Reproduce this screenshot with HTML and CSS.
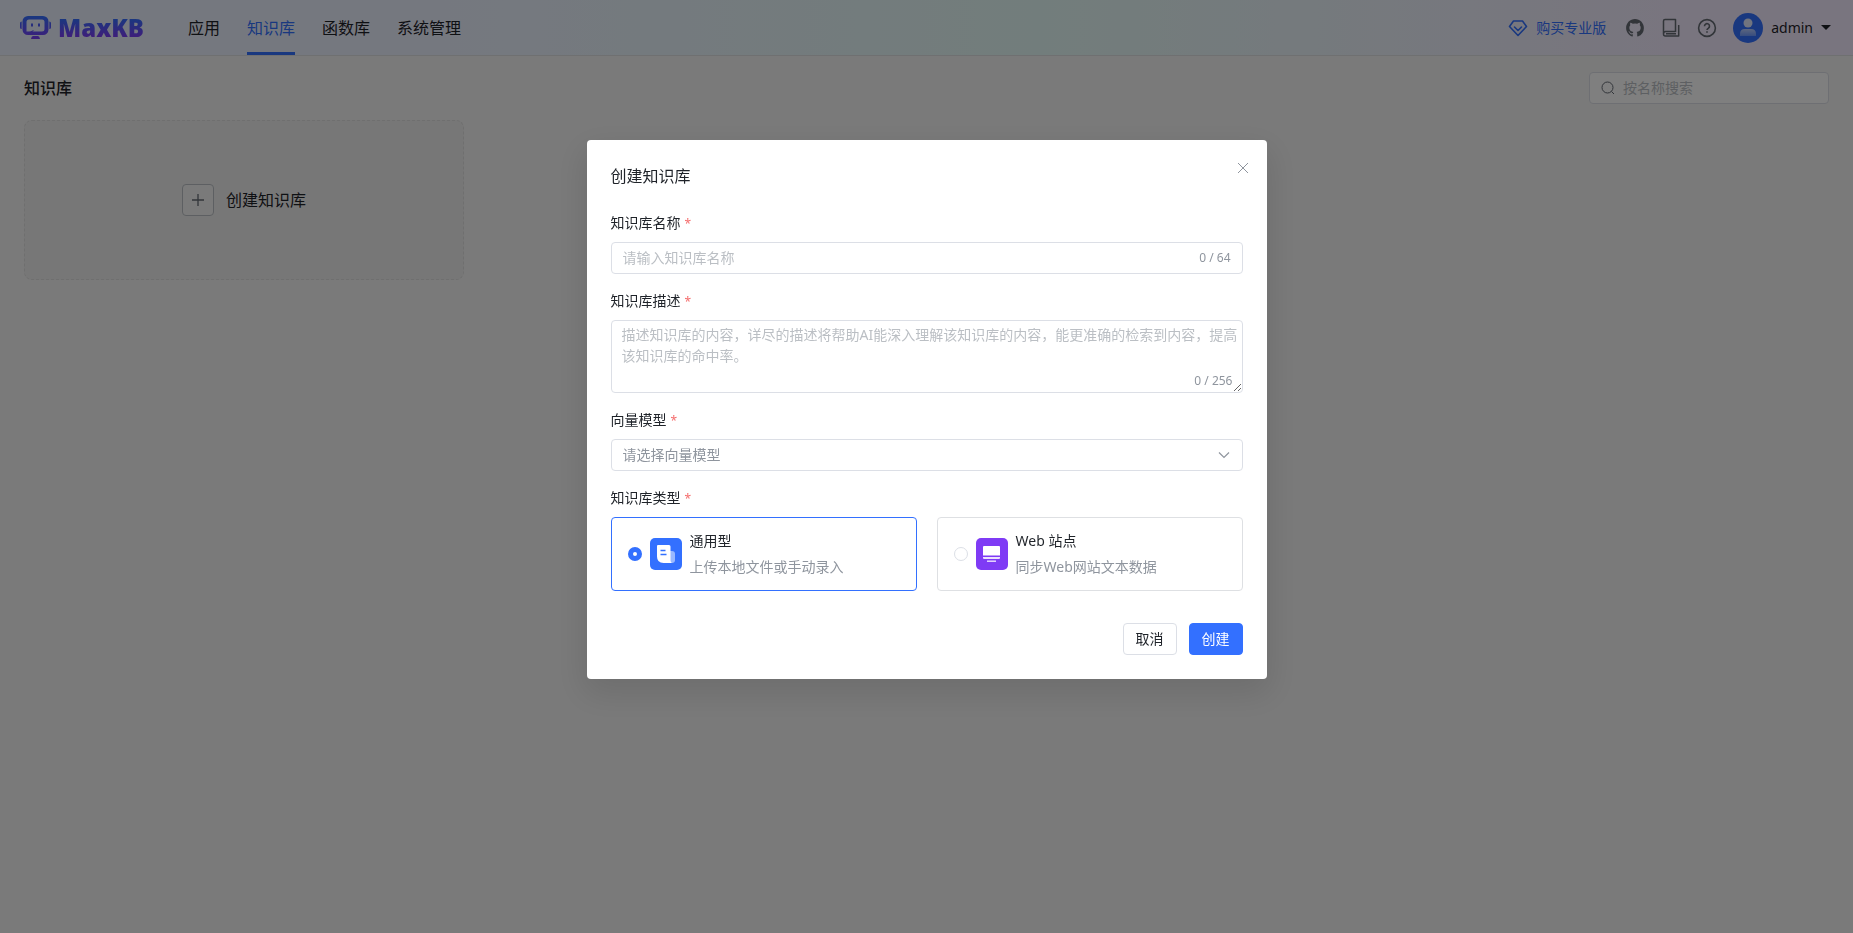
FILE: index.html
```html
<!DOCTYPE html>
<html lang="zh-CN">
<head>
    <meta charset="UTF-8">
    <meta name="viewport" content="width=device-width, initial-scale=1.0">
    <title>MaxKB</title>
    <link rel="stylesheet" href="styles.css">
</head>
<body>
    <header class="app-header">
        <a class="logo" href="#" aria-label="MaxKB">
            <svg class="logo-icon" viewBox="0 0 32 24" fill="none">
                <defs>
                    <linearGradient id="logoFill" x1="0" y1="0" x2="0" y2="24" gradientUnits="userSpaceOnUse">
                        <stop stop-color="#3370ff"/>
                        <stop offset="1" stop-color="#7f3bf5"/>
                    </linearGradient>
                </defs>
                <path fill="url(#logoFill)" fill-rule="evenodd" d="M8 0h15a5.500 5.500 0 0 1 5.500 5.500v8a5.500 5.500 0 0 1-5.500 5.500H8a5.500 5.500 0 0 1-5.500-5.500v-8A5.500 5.500 0 0 1 8 0zM9 3.500a2.500 2.500 0 0 0-2.500 2.500v9.500h2.500q2 0 3.500-1l1.500-.5q-1 1.500-2 1.500h10a2.500 2.500 0 0 0 2.500-2.500V6a2.500 2.500 0 0 0-2.500-2.500z"/>
                <path fill="url(#logoFill)" d="M0 7q0-1.500 1.700-1.500v7.500Q0 13 0 11.500zM31 7q0-1.500-1.700-1.500v7.500q1.700 0 1.700-1.500zM13 20h5q1.500 0 2 3h-9q.5-3 2-3zM11 7.500h2v3h-2zM18 7.500h2v3h-2z"/>
            </svg>
            <span class="logo-text">MaxKB</span>
        </a>
        <nav class="main-nav">
            <a href="#">应用</a>
            <a class="active" href="#">知识库</a>
            <a href="#">函数库</a>
            <a href="#">系统管理</a>
        </nav>
        <div class="header-right">
            <a class="buy-link" href="#">
                <svg class="icon" viewBox="0 0 20 20" fill="none" stroke="currentColor" stroke-width="1.600" stroke-linejoin="round" stroke-linecap="round">
                    <path d="M5.500 3h9L18.500 8.500 10 17.500 1.500 8.500zM6.500 9 10 12.500 13.500 9"/>
                </svg>
                购买专业版
            </a>
            <div class="header-tools">
                <a href="#" aria-label="GitHub">
                    <svg class="icon" viewBox="-1 -1 18 18" fill="currentColor">
                        <path d="M8 0C3.580 0 0 3.580 0 8c0 3.540 2.290 6.530 5.470 7.590.4.070.55-.17.55-.38 0-.19-.01-.82-.01-1.490-2.010.37-2.530-.49-2.690-.94-.09-.23-.48-.94-.82-1.130-.28-.15-.68-.52-.01-.53.63-.01 1.080.58 1.230.82.72 1.210 1.870.87 2.330.66.07-.52.28-.87.51-1.070-1.780-.2-3.640-.89-3.640-3.950 0-.87.31-1.590.82-2.150-.08-.2-.36-1.020.08-2.120 0 0 .67-.21 2.200.82a7.500 7.500 0 0 1 4 0c1.530-1.040 2.200-.82 2.200-.82.44 1.100.16 1.920.08 2.120.51.56.82 1.270.82 2.150 0 3.070-1.870 3.750-3.650 3.950.29.25.54.73.54 1.480 0 1.070-.01 1.930-.01 2.200 0 .21.15.46.55.38A8 8 0 0 0 16 8c0-4.420-3.580-8-8-8z"/>
                    </svg>
                </a>
                <a href="#" aria-label="文档">
                    <svg class="icon" viewBox="0 0 20 20" fill="none" stroke="currentColor" stroke-width="1.500" stroke-linejoin="round">
                        <path d="M14.500 14V1.500H4Q2.500 1.500 2.500 3v13q0 2 1.800 2h13.400V7M14.500 13.500H4.500Q2.500 13.500 2.500 16M5 15.800h10"/>
                    </svg>
                </a>
                <a href="#" aria-label="帮助">
                    <svg class="icon" viewBox="0 0 20 20" fill="none" stroke="currentColor" stroke-width="1.600">
                        <circle cx="10" cy="10" r="8.400"/>
                        <path d="M7.500 8.300a2.500 2.500 0 1 1 3.900 1.900Q10 11 10 12M10 13.200v1.600"/>
                    </svg>
                </a>
            </div>
            <button class="user-menu" type="button">
                <svg class="avatar" viewBox="0 0 30 30">
                    <defs>
                        <linearGradient id="bodyFill" x1="0" y1="15" x2="0" y2="23" gradientUnits="userSpaceOnUse">
                            <stop stop-color="#fff" stop-opacity=".7"/>
                            <stop offset="1" stop-color="#fff" stop-opacity=".3"/>
                        </linearGradient>
                    </defs>
                    <circle cx="15" cy="15" r="15" fill="#3370ff"/>
                    <circle cx="15" cy="10" r="4.500" fill="#e0e9ff"/>
                    <path fill="url(#bodyFill)" d="M7 23v-2q0-5 5-5h6q5 0 5 5v2z"/>
                </svg>
                admin
                <span class="caret"></span>
            </button>
        </div>
    </header>

    <main class="page">
        <div class="page-head">
            <h1>知识库</h1>
            <label class="search">
                <svg viewBox="0 0 14 14" fill="none" stroke="currentColor">
                    <circle cx="6.500" cy="6.500" r="5.500"/>
                    <path d="m10.500 10.500 2.500 2.500"/>
                </svg>
                <input type="text" placeholder="按名称搜索" aria-label="按名称搜索">
            </label>
        </div>
        <div class="card-grid">
            <button class="create-card" type="button">
                <span class="plus-box">
                    <svg viewBox="0 0 12 12" fill="none" stroke="currentColor" stroke-width="1.300"><path d="M6 0v12M0 6h12"/></svg>
                </span>
                创建知识库
            </button>
        </div>
    </main>

    <div class="overlay">
        <form class="dialog" role="dialog" aria-labelledby="dialogTitle">
            <button class="dialog-close" type="button" aria-label="关闭">
                <svg viewBox="0 0 12 12" fill="none" stroke="currentColor"><path d="m1 1 10 10M11 1 1 11"/></svg>
            </button>
            <h2 id="dialogTitle">创建知识库</h2>

            <div class="form-item">
                <label class="form-label" for="name">知识库名称<span class="required">*</span></label>
                <div class="field">
                    <input id="name" type="text" maxlength="64" placeholder="请输入知识库名称">
                    <span class="count">0 / 64</span>
                </div>
            </div>

            <div class="form-item">
                <label class="form-label" for="desc">知识库描述<span class="required">*</span></label>
                <div class="textarea-wrap">
                    <textarea id="desc" maxlength="256" placeholder="描述知识库的内容，详尽的描述将帮助AI能深入理解该知识库的内容，能更准确的检索到内容，提高该知识库的命中率。"></textarea>
                    <span class="count">0 / 256</span>
                </div>
            </div>

            <div class="form-item">
                <label class="form-label" for="model">向量模型<span class="required">*</span></label>
                <div class="field">
                    <select id="model">
                        <option>请选择向量模型</option>
                    </select>
                    <svg class="arrow" viewBox="0 0 14 14" fill="none" stroke="currentColor" stroke-width="1.200"><path d="m2 4.500 5 5 5-5"/></svg>
                </div>
            </div>

            <fieldset class="form-item">
                <legend class="form-label">知识库类型<span class="required">*</span></legend>
                <div class="type-list">
                    <label class="type-card">
                        <input type="radio" name="type" checked>
                        <svg class="type-icon" viewBox="0 0 32 32">
                            <rect width="32" height="32" rx="5" fill="#3370ff"/>
                            <path fill="#fff" fill-opacity=".5" d="M20 13h2q3 0 3 3v6q0 3-3 3h-3z"/>
                            <path fill="#fff" d="M8 7h11q1.500 0 1.500 1.500V22q0 3 2 3h-9Q7 25 7 18.500V8q0-1 1-1z"/>
                            <path stroke="#3370ff" stroke-width="1.500" d="M10.500 12.500h5M10.500 16.500h6"/>
                        </svg>
                        <span class="type-text">
                            <span>通用型</span>
                            <span class="type-desc">上传本地文件或手动录入</span>
                        </span>
                    </label>
                    <label class="type-card">
                        <input type="radio" name="type">
                        <svg class="type-icon" viewBox="0 0 32 32">
                            <rect width="32" height="32" rx="5" fill="#7f3bf5"/>
                            <path fill="#fff" d="M8 8h15q1 0 1 1v8.500H7V9q0-1 1-1z"/>
                            <path fill="#fff" fill-opacity=".85" d="M7 19h17v1q0 1-1 1H8q-1 0-1-1z"/>
                            <path stroke="#fff" stroke-opacity=".8" stroke-width="1.500" d="M11 23.200h9"/>
                        </svg>
                        <span class="type-text">
                            <span>Web 站点</span>
                            <span class="type-desc">同步Web网站文本数据</span>
                        </span>
                    </label>
                </div>
            </fieldset>

            <div class="dialog-footer">
                <button class="btn" type="button">取消</button>
                <button class="btn btn-primary" type="submit">创建</button>
            </div>
        </form>
    </div>
</body>
</html>
```
FILE: styles.css
```css
* {
    margin: 0;
    padding: 0;
    box-sizing: border-box;
}

body {
    font-family: "Noto Sans", "Noto Sans CJK SC", sans-serif;
    font-size: 14px;
    line-height: 22px;
    color: #1f2329;
    background: #f5f5f5;
    min-height: 100vh;
}

a {
    color: inherit;
    text-decoration: none;
}

button,
input,
textarea,
select {
    font: inherit;
    color: inherit;
}

button {
    cursor: pointer;
}

svg {
    display: block;
    flex-shrink: 0;
}

/* header */
.app-header {
    display: flex;
    align-items: center;
    height: 56px;
    padding: 0 22px 0 20px;
    border-bottom: 1px solid #dee0e3;
    background: linear-gradient(90deg, #ebf1ff 24%, #e5fbf8 56%, #f2ebfe 90%);
}

.logo {
    display: flex;
    align-items: center;
    gap: 6px;
    margin-right: 44px;
}

.logo-icon {
    width: 32px;
    height: 24px;
}

.logo-text {
    font-size: 24px;
    font-weight: 900;
    line-height: 32px;
    background: linear-gradient(180deg, #3370ff 20%, #7f3bf5 80%);
    background-clip: text;
    -webkit-background-clip: text;
    color: transparent;
}

.main-nav {
    display: flex;
    align-self: stretch;
    gap: 27px;
    font-size: 16px;
}

.main-nav a {
    display: flex;
    align-items: center;
    border-top: 3px solid transparent;
    border-bottom: 3px solid transparent;
}

.main-nav .active {
    color: #3370ff;
    border-bottom-color: #3370ff;
}

.header-right {
    display: flex;
    align-items: center;
    margin-left: auto;
    gap: 16px;
}

.buy-link {
    display: flex;
    align-items: center;
    gap: 8px;
    margin-right: 3px;
    color: #3370ff;
}

.icon {
    width: 20px;
    height: 20px;
}

.header-tools {
    display: flex;
    gap: 16px;
    color: #646a73;
}

.user-menu {
    display: flex;
    align-items: center;
    gap: 8px;
    border: none;
    background: none;
}

.avatar {
    width: 30px;
    height: 30px;
}

.caret {
    border: 5px solid transparent;
    border-top-color: #1f2329;
    border-bottom: 0;
}

/* page */
.page {
    padding: 16px 24px;
}

.page-head {
    display: flex;
    align-items: center;
    justify-content: space-between;
    margin-bottom: 16px;
}

.page-head h1 {
    font-size: 16px;
    font-weight: 500;
}

.search {
    display: flex;
    align-items: center;
    gap: 8px;
    width: 240px;
    height: 32px;
    padding: 0 11px;
    border: 1px solid #dcdfe6;
    border-radius: 4px;
    background: #fff;
    color: #646a73;
}

.search svg {
    width: 14px;
    height: 14px;
}

.search input {
    flex: 1;
    min-width: 0;
    border: none;
    outline: none;
    background: none;
}

::placeholder {
    color: #bbbfc4;
    opacity: 1;
}

.card-grid {
    display: grid;
    grid-template-columns: repeat(4, 1fr);
    gap: 15px;
}

.create-card {
    display: flex;
    align-items: center;
    justify-content: center;
    gap: 12px;
    height: 160px;
    border: 1px dashed #dedede;
    border-radius: 8px;
    background: #efefef;
    font-size: 16px;
}

.plus-box {
    display: flex;
    align-items: center;
    justify-content: center;
    width: 32px;
    height: 32px;
    border: 1px solid #bbbfc4;
    border-radius: 4px;
    background: #f5f5f5;
    color: #646a73;
}

.plus-box svg {
    width: 12px;
    height: 12px;
}

/* dialog */
.overlay {
    position: fixed;
    inset: 0;
    display: flex;
    align-items: flex-start;
    justify-content: center;
    padding-top: 15vh;
    background: rgba(0, 0, 0, 0.5);
}

.dialog {
    position: relative;
    width: 680px;
    padding: 24px;
    border-radius: 4px;
    background: #fff;
    box-shadow: 0 12px 32px 4px rgba(0, 0, 0, 0.1);
}

.dialog h2 {
    margin-bottom: 24px;
    font-size: 16px;
    font-weight: 400;
    line-height: 24px;
}

.dialog-close {
    position: absolute;
    top: 20px;
    right: 16px;
    padding: 2px;
    border: none;
    background: none;
    color: #8f959e;
}

.dialog-close svg {
    width: 12px;
    height: 12px;
}

.form-item {
    margin-bottom: 16px;
    border: none;
}

.form-label {
    display: block;
    margin-bottom: 8px;
}

.required {
    margin-left: 4px;
    font-size: 12px;
    line-height: 12px;
    color: #f56c6c;
}

.field {
    display: flex;
    align-items: center;
    height: 32px;
    padding: 0 11px;
    border: 1px solid #dcdfe6;
    border-radius: 4px;
}

.field input,
.field select {
    flex: 1;
    min-width: 0;
    border: none;
    outline: none;
    background: none;
    appearance: none;
}

.field select {
    color: #8f959e;
}

.arrow {
    width: 14px;
    height: 14px;
    color: #8f959e;
}

.count {
    font-size: 12px;
    line-height: 14px;
    color: #8f959e;
}

.textarea-wrap {
    position: relative;
}

.textarea-wrap textarea {
    display: block;
    width: 100%;
    height: 73px;
    padding: 3px 4px 3px 10px;
    border: 1px solid #dcdfe6;
    border-radius: 4px;
    outline: none;
    line-height: 21px;
    resize: vertical;
}

.textarea-wrap .count {
    position: absolute;
    right: 10px;
    bottom: 5px;
}

.type-list {
    display: grid;
    grid-template-columns: 1fr 1fr;
    gap: 20px;
}

.type-card {
    display: flex;
    align-items: center;
    gap: 8px;
    padding: 12px 16px;
    border: 1px solid #dee0e3;
    border-radius: 4px;
    cursor: pointer;
}

.type-card:has(input:checked) {
    border-color: #3370ff;
}

.type-card input {
    appearance: none;
    width: 14px;
    height: 14px;
    border: 1px solid #dcdfe6;
    border-radius: 50%;
}

.type-card input:checked {
    border: 5px solid #3370ff;
}

.type-icon {
    width: 32px;
    height: 32px;
}

.type-text {
    display: flex;
    flex-direction: column;
    gap: 4px;
}

.type-desc {
    color: #8f959e;
}

.dialog-footer {
    display: flex;
    justify-content: flex-end;
    gap: 12px;
    margin-top: 32px;
}

.btn {
    height: 32px;
    padding: 0 12px;
    border: 1px solid #dcdfe6;
    border-radius: 4px;
    background: #fff;
}

.btn-primary {
    border-color: #3370ff;
    background: #3370ff;
    color: #fff;
}
```
